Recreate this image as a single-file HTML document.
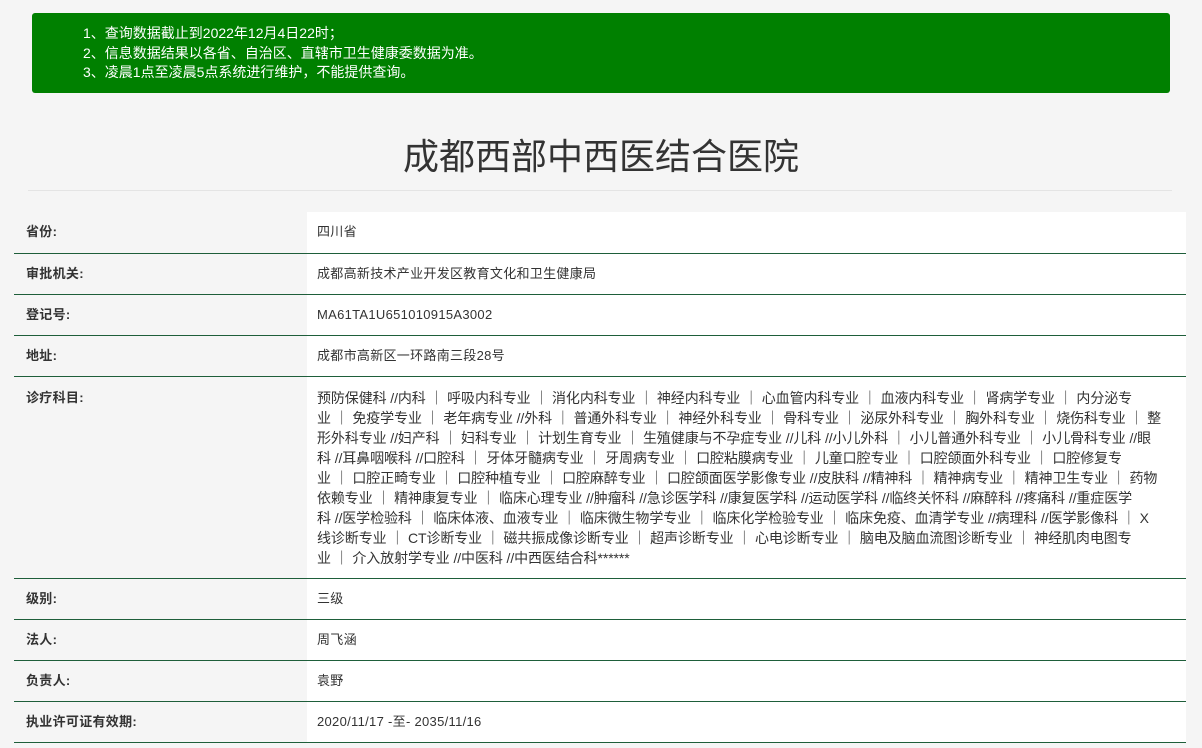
<!DOCTYPE html>
<html><head><meta charset="utf-8"><style>
*{margin:0;padding:0;box-sizing:border-box}
body{width:1202px;height:748px;background:#f5f5f5;font-family:"Liberation Sans","Noto Sans CJK SC",sans-serif;color:#333;font-size:13px;overflow:hidden;position:relative}
.alert{position:absolute;left:32px;top:13px;width:1138px;height:80px;background:#008000;border-radius:3px;color:#fff;font-size:14px;line-height:19.5px;padding:11px 0 0 51px}
h1{position:absolute;left:0;width:1202px;top:133px;text-align:center;font-weight:normal;font-size:36px;line-height:48px;color:#333}
.hr{position:absolute;left:28px;width:1144px;top:190px;border-top:1px solid #e4e4e4}
table{position:absolute;left:14px;top:212px;width:1172px;border-collapse:collapse}
td{border-bottom:1px solid #1e5e3a;height:41px;vertical-align:middle;line-height:20px;letter-spacing:0.3px}
td.l{width:293px;padding-left:12px;font-weight:bold;background:#f5f5f5}
td.v{background:#fff;padding-left:10px}
tr.big td{vertical-align:top;padding-top:11px;height:202px}
tr.big td.v{font-size:14px;letter-spacing:-0.1px}
.nw{white-space:nowrap}
</style></head><body>
<div class="alert">1、查询数据截止到2022年12月4日22时；<br>2、信息数据结果以各省、自治区、直辖市卫生健康委数据为准。<br>3、凌晨1点至凌晨5点系统进行维护，不能提供查询。</div>
<h1>成都西部中西医结合医院</h1>
<div class="hr"></div>
<table>
<tr><td class="l">省份:</td><td class="v">四川省</td></tr>
<tr><td class="l">审批机关:</td><td class="v">成都高新技术产业开发区教育文化和卫生健康局</td></tr>
<tr><td class="l">登记号:</td><td class="v">MA61TA1U651010915A3002</td></tr>
<tr><td class="l">地址:</td><td class="v">成都市高新区一环路南三段28号</td></tr>
<tr class="big"><td class="l">诊疗科目:</td><td class="v"><div class="nw">预防保健科 //内科 ｜ 呼吸内科专业 ｜ 消化内科专业 ｜ 神经内科专业 ｜ 心血管内科专业 ｜ 血液内科专业 ｜ 肾病学专业 ｜ 内分泌专</div><div class="nw">业 ｜ 免疫学专业 ｜ 老年病专业 //外科 ｜ 普通外科专业 ｜ 神经外科专业 ｜ 骨科专业 ｜ 泌尿外科专业 ｜ 胸外科专业 ｜ 烧伤科专业 ｜ 整</div><div class="nw">形外科专业 //妇产科 ｜ 妇科专业 ｜ 计划生育专业 ｜ 生殖健康与不孕症专业 //儿科 //小儿外科 ｜ 小儿普通外科专业 ｜ 小儿骨科专业 //眼</div><div class="nw">科 //耳鼻咽喉科 //口腔科 ｜ 牙体牙髓病专业 ｜ 牙周病专业 ｜ 口腔粘膜病专业 ｜ 儿童口腔专业 ｜ 口腔颌面外科专业 ｜ 口腔修复专</div><div class="nw">业 ｜ 口腔正畸专业 ｜ 口腔种植专业 ｜ 口腔麻醉专业 ｜ 口腔颌面医学影像专业 //皮肤科 //精神科 ｜ 精神病专业 ｜ 精神卫生专业 ｜ 药物</div><div class="nw">依赖专业 ｜ 精神康复专业 ｜ 临床心理专业 //肿瘤科 //急诊医学科 //康复医学科 //运动医学科 //临终关怀科 //麻醉科 //疼痛科 //重症医学</div><div class="nw">科 //医学检验科 ｜ 临床体液、血液专业 ｜ 临床微生物学专业 ｜ 临床化学检验专业 ｜ 临床免疫、血清学专业 //病理科 //医学影像科 ｜ X</div><div class="nw">线诊断专业 ｜ CT诊断专业 ｜ 磁共振成像诊断专业 ｜ 超声诊断专业 ｜ 心电诊断专业 ｜ 脑电及脑血流图诊断专业 ｜ 神经肌肉电图专</div><div class="nw">业 ｜ 介入放射学专业 //中医科 //中西医结合科******</div></td></tr>
<tr><td class="l">级别:</td><td class="v">三级</td></tr>
<tr><td class="l">法人:</td><td class="v">周飞涵</td></tr>
<tr><td class="l">负责人:</td><td class="v">袁野</td></tr>
<tr><td class="l">执业许可证有效期:</td><td class="v">2020/11/17 -至- 2035/11/16</td></tr>
</table>
</body></html>
